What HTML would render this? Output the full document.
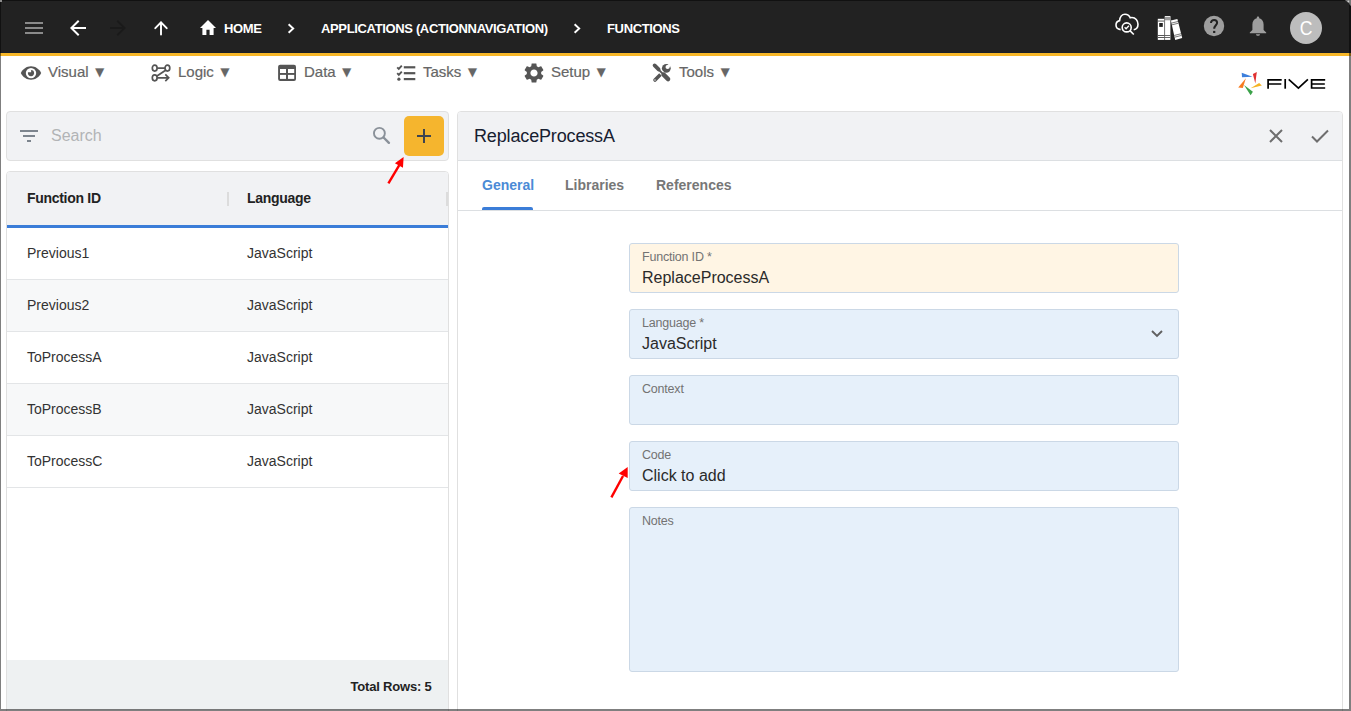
<!DOCTYPE html>
<html><head><meta charset="utf-8">
<style>
*{box-sizing:border-box;margin:0;padding:0}
html,body{width:1351px;height:711px;overflow:hidden;background:#fff;font-family:"Liberation Sans",sans-serif;position:relative}
.a{position:absolute}
#hdr{left:0;top:0;width:1351px;height:53px;background:#222;border-bottom:1px solid #1a2029}
#yl{left:0;top:53px;width:1351px;height:3px;background:#f7b728}
#frame{left:0;top:0;width:1351px;height:711px;border-style:solid;border-color:rgba(0,0,0,.5);border-width:1px 2px 2px 1px;z-index:100;pointer-events:none}
.bc{color:#fff;font-weight:bold;font-size:13px;top:22px;line-height:14px;white-space:nowrap;letter-spacing:-0.35px}
.mi{color:#666;font-size:15px;top:64px;line-height:16px;white-space:nowrap;-webkit-text-stroke:0.2px #666;word-spacing:-0.5px}
.panel{border:1px solid #e0e0e0;border-radius:4px}
.th{font-weight:bold;font-size:14px;color:#222;line-height:16px;letter-spacing:-0.3px;white-space:nowrap}
.td{font-size:14px;color:#333;line-height:16px}
.row{left:7px;width:441px;height:52px;border-bottom:1px solid #e3e5e7}
.fld{left:629px;width:550px;height:50px;border:1px solid #cbd8e6;border-radius:3px;background:#e6f0fa}
.lbl{left:12px;top:6px;font-size:12.5px;color:#737373;letter-spacing:-0.2px;line-height:14px;white-space:nowrap}
.val{left:12px;top:24.5px;font-size:16px;color:#2a2a2a;line-height:18px;white-space:nowrap}
.tab{top:177px;font-size:14px;font-weight:bold;color:#777;line-height:16px}
</style></head><body>
<div id="hdr" class="a"></div>
<div id="yl" class="a"></div>

<!-- header icons -->
<svg class="a" style="left:25px;top:21px" width="18" height="14" viewBox="0 0 18 14"><rect x="0" y="1" width="18" height="2" fill="#8a8a8a"/><rect x="0" y="6" width="18" height="2" fill="#8a8a8a"/><rect x="0" y="11" width="18" height="2" fill="#8a8a8a"/></svg>
<svg class="a" style="left:70px;top:20px" width="16" height="16" viewBox="0 0 16 16"><path d="M16 7H3.83l5.59-5.59L8 0 0 8l8 8 1.41-1.41L3.83 9H16z" fill="#fff"/></svg>
<svg class="a" style="left:110px;top:20px" width="16" height="16" viewBox="0 0 16 16"><path d="M0 7h12.17L6.58 1.41 8 0l8 8-8 8-1.41-1.41L12.17 9H0z" fill="#1a1a1a"/></svg>
<svg class="a" style="left:148px;top:16px" width="26" height="24" fill="none" stroke="#fff" stroke-width="1.9" stroke-linecap="round"><path d="M13 6.6V18.6"/><path d="M7.3 12.2L13 6.3 18.7 12.2"/></svg>
<svg class="a" style="left:200px;top:20px" width="16" height="15" viewBox="0 0 16 15"><path d="M6.4 15V9.7h3.2V15h4V7.9H16L8 0 0 7.9h2.4V15z" fill="#fff"/></svg>
<div class="a bc" style="left:224px">HOME</div>
<svg class="a" style="left:287px;top:23px" width="8" height="11" viewBox="0 0 8 11"><path d="M1.6 1.2L6.2 5.5 1.6 9.8" stroke="#fff" stroke-width="1.9" fill="none"/></svg>
<div class="a bc" style="left:321px">APPLICATIONS (ACTIONNAVIGATION)</div>
<svg class="a" style="left:573px;top:23px" width="8" height="11" viewBox="0 0 8 11"><path d="M1.6 1.2L6.2 5.5 1.6 9.8" stroke="#fff" stroke-width="1.9" fill="none"/></svg>
<div class="a bc" style="left:607px">FUNCTIONS</div>

<!-- right header icons -->
<svg class="a" style="left:1114px;top:12px" width="26" height="26" fill="none" stroke="#fff" stroke-width="1.6"><path d="M6.6 17.6C3.8 17.4 2 15.6 2 13.1 2 10.9 3.5 9.1 5.6 8.6 5.9 5 8 2.2 11 2.2 13.6 2.2 15.4 3.8 16.2 5.8 16.8 5.6 17.4 5.5 18 5.5 21.4 5.5 24 8.4 24 12.2 24 15 22.2 17.3 19.7 17.8"/><circle cx="12.7" cy="15.4" r="4.5"/><path d="M15.9 18.6l3.9 3.9"/><path d="M10.6 15.3l1.5 1.5 2.8-3" stroke-width="1.3"/></svg>
<svg class="a" style="left:1154px;top:12px" width="32" height="32"><rect x="3.8" y="6.8" width="6.3" height="21.1" fill="#fff"/><rect x="3.8" y="8.6" width="6.3" height="0.9" fill="#444"/><rect x="5.2" y="11" width="3.6" height="3.9" fill="#222"/><rect x="3.8" y="23.1" width="12.6" height="0.9" fill="#555"/><rect x="3.8" y="25.1" width="12.6" height="0.9" fill="#555"/><rect x="10.8" y="4" width="5.6" height="23.9" fill="#fff"/><rect x="10.8" y="4.8" width="5.6" height="3.5" fill="#9a9a9a"/><rect x="10.2" y="6.8" width="0.9" height="21.1" fill="#888"/><rect x="3.8" y="23.1" width="12.6" height="0.9" fill="#555"/><rect x="3.8" y="25.1" width="12.6" height="0.9" fill="#555"/><path d="M16.9 8.6L23.4 7L28.2 26.1L21.2 27.9z" fill="#fff"/><path d="M17.46 11.11L24.02 9.48" stroke="#555" stroke-width="0.8"/><path d="M17.85 12.85L24.46 11.20" stroke="#555" stroke-width="0.8"/><path d="M20.21 23.46L27.10 21.71" stroke="#555" stroke-width="0.8"/><path d="M20.60 25.20L27.53 23.43" stroke="#555" stroke-width="0.8"/></svg>
<svg class="a" style="left:1203px;top:15px" width="22" height="22" viewBox="0 0 22 22"><circle cx="11" cy="11" r="10.2" fill="#9e9e9e"/><path d="M8 8.1C8 6.1 9.4 4.9 11.1 4.9S14.1 6 14.1 7.8C14.1 10 11.2 10.7 11.2 13.7" stroke="#222" stroke-width="2" fill="none"/><rect x="10.1" y="15.9" width="2.2" height="2.1" fill="#222"/></svg>
<svg class="a" style="left:1249px;top:16px" width="18" height="20" viewBox="0 0 18 20"><path d="M9 0.5c.7 0 1.2.5 1.2 1.2v.6C13 3 14.6 5.4 14.6 8.4V14l2.6 2.4v.9H.8v-.9L3.4 14V8.4c0-3 1.6-5.4 4.4-6.1v-.6C7.8 1 8.3.5 9 .5zM7 18.2h4c0 1-.9 1.6-2 1.6s-2-.6-2-1.6z" fill="#9e9e9e"/></svg>
<div class="a" style="left:1290px;top:12px;width:32px;height:32px;border-radius:50%;background:#bdbdbd"></div><div class="a" style="left:1290px;top:13px;width:32px;color:#fff;font-size:20px;line-height:30px;text-align:center;transform:scaleX(.88)">C</div>

<!-- menu bar -->
<svg class="a" style="left:15px;top:60px" width="30" height="25"><path d="M5.8 13.1C7.8 9.1 11.5 6.3 16 6.3S24.2 9.1 26.2 13.1C24.2 17.1 20.5 19.8 16 19.8S7.8 17.1 5.8 13.1z" fill="#555"/><circle cx="16" cy="13.1" r="5.2" fill="#fff"/><circle cx="16" cy="13.1" r="3.1" fill="#555"/><path d="M16.1 12.3V9.2A3.1 3.1 0 0 0 12.6 12.3z" fill="#fff"/></svg>
<div class="a mi" style="left:48px">Visual ▼</div>
<svg class="a" style="left:145px;top:58px" width="35" height="30" fill="none" stroke="#555" stroke-width="1.7"><ellipse cx="9.7" cy="10.1" rx="2.4" ry="3"/><ellipse cx="22.4" cy="10.1" rx="2.4" ry="3"/><ellipse cx="9.7" cy="19.8" rx="2.4" ry="3"/><path d="M12.1 10.1H20M20.6 12.2L11.6 18.2M12.1 19.8H23.5M20.3 16.4l3.4 3.4-3.4 3.4"/></svg>
<div class="a mi" style="left:178px">Logic ▼</div>
<svg class="a" style="left:272px;top:58px" width="30" height="30"><rect x="6.1" y="6.8" width="17.9" height="16.2" rx="2" fill="#555"/><rect x="8" y="11" width="6" height="4" fill="#fff"/><rect x="16" y="11" width="6.2" height="4" fill="#fff"/><rect x="8" y="16.9" width="6" height="4" fill="#fff"/><rect x="16" y="16.9" width="6.2" height="4" fill="#fff"/></svg>
<div class="a mi" style="left:304px">Data ▼</div>
<svg class="a" style="left:390px;top:58px" width="30" height="30" fill="#555"><rect x="13.8" y="8.2" width="11.5" height="2.2"/><rect x="13.8" y="14.1" width="11.5" height="2.2"/><rect x="13.8" y="20" width="11.5" height="2.2"/><path d="M7.2 9.3l1.6 1.6 3-3.2" stroke="#555" stroke-width="1.9" fill="none"/><path d="M7.2 15.2l1.6 1.6 3-3.2" stroke="#555" stroke-width="1.9" fill="none"/><circle cx="8.9" cy="21.2" r="1.6"/></svg>
<div class="a mi" style="left:423px">Tasks ▼</div>
<svg class="a" style="left:522px;top:61px" width="24" height="24" viewBox="0 0 24 24"><path d="M19.14 12.94c.04-.3.06-.61.06-.94 0-.32-.02-.64-.07-.94l2.03-1.58c.18-.14.23-.41.12-.61l-1.92-3.32c-.12-.22-.37-.29-.59-.22l-2.39.96c-.5-.38-1.03-.7-1.62-.94l-.36-2.54c-.04-.24-.24-.41-.48-.41h-3.84c-.24 0-.43.17-.47.41l-.36 2.54c-.59.24-1.130.57-1.62.94l-2.39-.96c-.22-.08-.47 0-.59.22L2.74 8.87c-.12.21-.08.47.12.61l2.03 1.58c-.05.3-.09.63-.09.94s.02.64.07.94l-2.03 1.58c-.18.14-.23.41-.12.61l1.920 3.32c.12.22.37.29.59.22l2.39-.96c.5.38 1.03.7 1.62.94l.36 2.54c.05.24.24.41.48.41h3.84c.24 0 .44-.17.47-.41l.36-2.54c.59-.24 1.13-.56 1.62-.94l2.39.96c.22.08.47 0 .59-.22l1.92-3.32c.12-.22.07-.47-.12-.61l-2.01-1.58zM12 15.6c-1.98 0-3.6-1.62-3.6-3.6s1.62-3.6 3.6-3.6 3.6 1.62 3.6 3.6-1.62 3.6-3.6 3.6z" fill="#555"/></svg>
<div class="a mi" style="left:551px">Setup ▼</div>
<svg class="a" style="left:645px;top:58px" width="35" height="30"><path d="M10 22L19.5 12.5" stroke="#555" stroke-width="3.6" stroke-linecap="round"/><circle cx="21.3" cy="10.3" r="4.4" fill="#555"/><circle cx="22.6" cy="9" r="2.1" fill="#fff"/><path d="M22.6 9L26.5 5.1" stroke="#fff" stroke-width="2.6"/><circle cx="10" cy="22" r="0.8" fill="#ddd"/><path d="M13.8 11.8L18.3 16.3M18.6 16.6L23.2 21.2" stroke="#fff" stroke-width="4.4"/><path d="M9.6 7.4L13.6 11.4" stroke="#555" stroke-width="3.8" stroke-linecap="round"/><path d="M13.5 11.5L18.3 16.3" stroke="#555" stroke-width="1.9"/><path d="M18.6 16.6L23.1 21.1" stroke="#555" stroke-width="4.4" stroke-linecap="round"/></svg>
<div class="a mi" style="left:679px">Tools ▼</div>

<!-- FIVE logo -->
<svg class="a" style="left:1236px;top:70px" width="28" height="28"><path d="M5.7 2.8L6 7.3 16.5 6.7z" fill="#3d7fdc"/><path d="M20.8 2L19.3 13.6 16.9 3.9z" fill="#e03131"/><path d="M25.9 15.6L23.1 12.9 14.6 18.3z" fill="#f5b324"/><path d="M8 15L16.9 21.8 14.6 25.3z" fill="#3ba24a"/><path d="M9.9 8.2L2.2 17.5 6.8 17.9z" fill="#f77b20"/></svg>
<svg class="a" style="left:1265px;top:77px" width="62" height="14" fill="none" stroke="#000" stroke-width="1.7"><path d="M3.1 11.7V2.8H16.7M3.1 7H16.3"/><path d="M20.2 2V11.7"/><path d="M23.7 2.3L33.4 11.2 42.9 2.3"/><path d="M60.2 2.8H46.6V11H60.2M46.6 7H59.8"/></svg>

<!-- left panel: search -->
<div class="a panel" style="left:6px;top:111px;width:443px;height:50px;background:#f1f2f4"></div>
<svg class="a" style="left:20px;top:129px" width="18" height="13" viewBox="0 0 18 13" fill="#7d858e"><rect x="0" y="1" width="18" height="2"/><rect x="3" y="6" width="12" height="2"/><rect x="7" y="11" width="4" height="2"/></svg>
<div class="a" style="left:51px;top:127px;font-size:16px;color:#b2b4b6;line-height:18px">Search</div>
<svg class="a" style="left:365px;top:118px" width="30" height="32" fill="none" stroke="#8a9199"><circle cx="14.4" cy="15.3" r="5.45" stroke-width="1.9"/><path d="M18.6 19.5L23.9 24.8" stroke-width="2.4" stroke-linecap="round"/></svg>
<div class="a" style="left:404px;top:116px;width:40px;height:40px;border-radius:5px;background:#f5b52e"></div>
<svg class="a" style="left:417px;top:129px" width="14" height="14" viewBox="0 0 14 14" fill="#3d4450"><rect x="6" y="0" width="2" height="14"/><rect x="0" y="6" width="14" height="2"/></svg>

<!-- left panel: table -->
<div class="a panel" style="left:6px;top:171px;width:443px;height:545px;background:#fff"></div>
<div class="a" style="left:7px;top:172px;width:441px;height:53px;background:#f1f2f4;border-radius:3px 3px 0 0"></div>
<div class="a" style="left:7px;top:225px;width:441px;height:3px;background:#3b7dd8"></div>
<div class="a th" style="left:27px;top:190px">Function ID</div>
<div class="a" style="left:227px;top:192px;width:2px;height:14px;background:#dcdcdc"></div>
<div class="a th" style="left:247px;top:190px">Language</div>
<div class="a" style="left:446px;top:192px;width:2px;height:14px;background:#dcdcdc"></div>

<div class="a row" style="top:228px;background:#fff"></div>
<div class="a row" style="top:280px;background:#f7f8f9"></div>
<div class="a row" style="top:332px;background:#fff"></div>
<div class="a row" style="top:384px;background:#f7f8f9"></div>
<div class="a row" style="top:436px;background:#fff"></div>
<div class="a td" style="left:27px;top:245px">Previous1</div><div class="a td" style="left:247px;top:245px">JavaScript</div>
<div class="a td" style="left:27px;top:297px">Previous2</div><div class="a td" style="left:247px;top:297px">JavaScript</div>
<div class="a td" style="left:27px;top:349px">ToProcessA</div><div class="a td" style="left:247px;top:349px">JavaScript</div>
<div class="a td" style="left:27px;top:401px">ToProcessB</div><div class="a td" style="left:247px;top:401px">JavaScript</div>
<div class="a td" style="left:27px;top:453px">ToProcessC</div><div class="a td" style="left:247px;top:453px">JavaScript</div>

<div class="a" style="left:7px;top:660px;width:441px;height:50px;background:#eef1f2"></div>
<div class="a th" style="left:300px;width:131.5px;text-align:right;top:679px;font-size:13px;letter-spacing:-0.2px">Total Rows: 5</div>

<!-- right panel -->
<div class="a panel" style="left:457px;top:111px;width:886px;height:610px;background:#fff"></div>
<div class="a" style="left:458px;top:112px;width:884px;height:48px;background:#f1f2f4;border-bottom:1px solid #dcdfe2;border-radius:3px 3px 0 0;height:49px"></div>
<div class="a" style="left:474px;top:126px;font-size:18px;color:#172030;line-height:20px;letter-spacing:-0.15px">ReplaceProcessA</div>
<svg class="a" style="left:1269px;top:129px" width="14" height="14" viewBox="0 0 14 14"><path d="M1 1l12 12M13 1L1 13" stroke="#6e6e6e" stroke-width="2"/></svg>
<svg class="a" style="left:1311px;top:129px" width="18" height="14" viewBox="0 0 18 14"><path d="M1 7.5l5 5L17 1.5" stroke="#6e6e6e" stroke-width="2" fill="none"/></svg>

<div class="a" style="left:458px;top:210px;width:884px;height:1px;background:#dcdfe2"></div>
<div class="a tab" style="left:482px;color:#4a8ad6">General</div>
<div class="a" style="left:482px;top:207px;width:51px;height:3px;background:#3b7dd8;border-radius:2px 2px 0 0"></div>
<div class="a tab" style="left:565px">Libraries</div>
<div class="a tab" style="left:656px">References</div>

<div class="a fld" style="top:243px;background:#fff5e4"><div class="a lbl">Function ID *</div><div class="a val">ReplaceProcessA</div></div>
<div class="a fld" style="top:309px"><div class="a lbl">Language *</div><div class="a val">JavaScript</div>
<svg class="a" style="left:521px;top:20px" width="12" height="8" viewBox="0 0 12 8"><path d="M1 1l5 5 5-5" stroke="#606060" stroke-width="1.9" fill="none"/></svg></div>
<div class="a fld" style="top:375px"><div class="a lbl">Context</div></div>
<div class="a fld" style="top:441px"><div class="a lbl">Code</div><div class="a val">Click to add</div></div>
<div class="a fld" style="top:507px;height:165px"><div class="a lbl">Notes</div></div>

<!-- red arrows -->
<svg class="a" style="left:380px;top:150px" width="30" height="40"><path d="M8.4 33.4L19.3 15.2" stroke="#f00" stroke-width="2.4"/><path d="M23.6 7L14.9 13.2 23 17.7z" fill="#f00"/></svg>
<svg class="a" style="left:603px;top:460px" width="30" height="40"><path d="M8.4 37.4L20 16" stroke="#f00" stroke-width="2.4"/><path d="M24.7 7L15.7 13.5 24.7 18z" fill="#f00"/></svg>

<div id="frame" class="a"></div>
<div class="a" style="left:0;top:0;width:2px;height:2px;background:#8c8c8c;z-index:101"></div>
<svg class="a" style="left:1339px;top:0;z-index:101" width="12" height="12"><path d="M6.5 0H12V6L10.8 5C10.5 3.2 9.2 1.6 6.5 1z" fill="#777"/><circle cx="9.3" cy="1.5" r="0.9" fill="#d0d0d0"/></svg>
</body></html>
